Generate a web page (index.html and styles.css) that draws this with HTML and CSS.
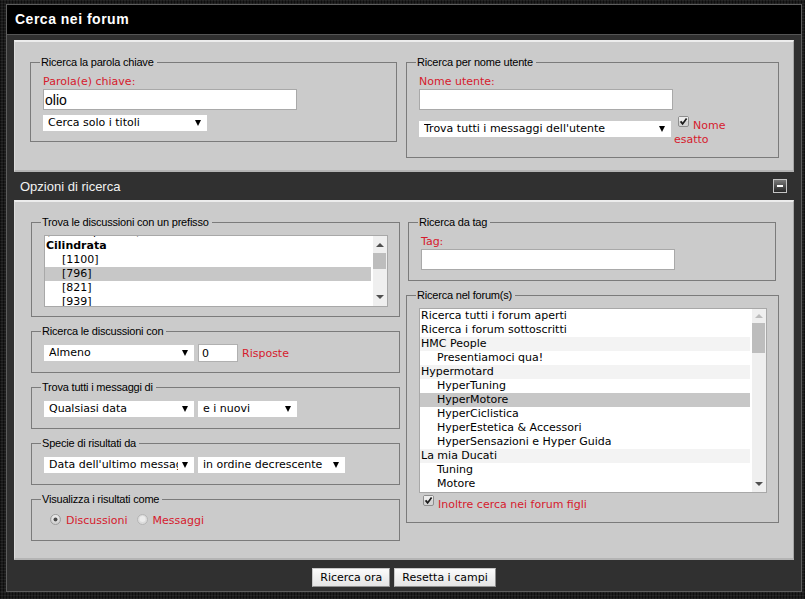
FILE: index.html
```html
<!DOCTYPE html>
<html lang="it">
<head>
    <meta charset="UTF-8">
    <meta name="viewport" content="width=device-width, initial-scale=1.0">
    <title>Cerca nei forum</title>
    <link rel="stylesheet" href="styles.css">
</head>
<body>
    <div class="frame">
        <div class="frame-title">Cerca nei forum</div>
        <div class="frame-body">

            <div class="panel panel-top">
                <fieldset class="box">
                    <legend>Ricerca la parola chiave</legend>
                    <label class="field-label" for="keywords">Parola(e) chiave:</label>
                    <input type="text" id="keywords" class="text-input" value="olio">
                    <span class="select select-titles">
                        <select><option>Cerca solo i titoli</option></select>
                    </span>
                </fieldset>

                <fieldset class="box">
                    <legend>Ricerca per nome utente</legend>
                    <label class="field-label" for="username">Nome utente:</label>
                    <input type="text" id="username" class="text-input">
                    <div class="user-row">
                        <span class="select select-user">
                            <select><option>Trova tutti i messaggi dell'utente</option></select>
                        </span>
                        <label class="check-label exact-name">
                            <svg class="check" width="11" height="11" viewBox="0 0 11 11"><rect x="0.5" y="0.5" width="10" height="10" rx="1.5" fill="#d4d4d4" stroke="#8e8e8e"/><rect x="1" y="1" width="9" height="4" fill="#ececec"/><path d="M2.6 5.4 L4.6 7.9 L8.6 2.4" fill="none" stroke="#1a1a1a" stroke-width="1.7"/></svg>Nome esatto
                        </label>
                    </div>
                </fieldset>
            </div>

            <div class="section-bar">
                <span>Opzioni di ricerca</span>
                <span class="collapse-btn"><span></span></span>
            </div>

            <div class="panel panel-options">
                <div class="col">
                    <fieldset class="box box-list">
                        <legend>Trova le discussioni con un prefisso</legend>
                        <div class="listbox prefix-list">
                            <div class="rows prefix-rows">
                                <div class="row">(nessun prefisso)</div>
                                <div class="row group-bold">Cilindrata</div>
                                <div class="row child">[1100]</div>
                                <div class="row child selected">[796]</div>
                                <div class="row child">[821]</div>
                                <div class="row child">[939]</div>
                            </div>
                            <div class="scrollbar">
                                <span class="arrow-up"></span>
                                <span class="thumb"></span>
                                <span class="spacer"></span>
                                <span class="arrow-down"></span>
                            </div>
                        </div>
                    </fieldset>

                    <fieldset class="box">
                        <legend>Ricerca le discussioni con</legend>
                        <div class="ctrl-row">
                            <span class="select w150"><select><option>Almeno</option></select></span>
                            <input type="text" class="num-input" value="0">
                            <span class="red">Risposte</span>
                        </div>
                    </fieldset>

                    <fieldset class="box">
                        <legend>Trova tutti i messaggi di</legend>
                        <div class="ctrl-row">
                            <span class="select w150"><select><option>Qualsiasi data</option></select></span>
                            <span class="select w99"><select><option>e i nuovi</option></select></span>
                        </div>
                    </fieldset>

                    <fieldset class="box">
                        <legend>Specie di risultati da</legend>
                        <div class="ctrl-row">
                            <span class="select w150"><select><option>Data dell'ultimo messaggio</option></select></span>
                            <span class="select w147"><select><option>in ordine decrescente</option></select></span>
                        </div>
                    </fieldset>

                    <fieldset class="box">
                        <legend>Visualizza i risultati come</legend>
                        <div class="ctrl-row radios">
                            <label class="radio-label">
                                <svg class="radio" width="11" height="11" viewBox="0 0 11 11"><circle cx="5.5" cy="5.5" r="5" fill="#d2d2d2" stroke="#9c9c9c"/><circle cx="5.5" cy="4.5" r="3.5" fill="#e6e6e6"/><circle cx="5.5" cy="5.5" r="2" fill="#4a4a4a"/></svg>Discussioni
                            </label>
                            <label class="radio-label second">
                                <svg class="radio" width="11" height="11" viewBox="0 0 11 11"><circle cx="5.5" cy="5.5" r="5" fill="#dcdcdc" stroke="#b4b4b4"/><circle cx="5.5" cy="5" r="3" fill="#ececec"/></svg>Messaggi
                            </label>
                        </div>
                    </fieldset>
                </div>

                <div class="col">
                    <fieldset class="box box-tag">
                        <legend>Ricerca da tag</legend>
                        <label class="field-label" for="tag">Tag:</label>
                        <input type="text" id="tag" class="text-input">
                    </fieldset>

                    <fieldset class="box box-forums">
                        <legend>Ricerca nel forum(s)</legend>
                        <div class="listbox forum-list">
                            <div class="rows">
                                <div class="row">Ricerca tutti i forum aperti</div>
                                <div class="row">Ricerca i forum sottoscritti</div>
                                <div class="row group">HMC People</div>
                                <div class="row child">Presentiamoci qua!</div>
                                <div class="row group">Hypermotard</div>
                                <div class="row child">HyperTuning</div>
                                <div class="row child selected">HyperMotore</div>
                                <div class="row child">HyperCiclistica</div>
                                <div class="row child">HyperEstetica &amp; Accessori</div>
                                <div class="row child">HyperSensazioni e Hyper Guida</div>
                                <div class="row group">La mia Ducati</div>
                                <div class="row child">Tuning</div>
                                <div class="row child">Motore</div>
                            </div>
                            <div class="scrollbar">
                                <span class="arrow-up disabled"></span>
                                <span class="thumb"></span>
                                <span class="spacer"></span>
                                <span class="arrow-down"></span>
                            </div>
                        </div>
                        <label class="check-label child-forums">
                            <svg class="check" width="11" height="11" viewBox="0 0 11 11"><rect x="0.5" y="0.5" width="10" height="10" rx="1.5" fill="#d4d4d4" stroke="#8e8e8e"/><rect x="1" y="1" width="9" height="4" fill="#ececec"/><path d="M2.6 5.4 L4.6 7.9 L8.6 2.4" fill="none" stroke="#1a1a1a" stroke-width="1.7"/></svg>Inoltre cerca nei forum figli
                        </label>
                    </fieldset>
                </div>
            </div>

            <div class="actions">
                <button type="button" class="btn">Ricerca ora</button>
                <button type="button" class="btn">Resetta i campi</button>
            </div>
        </div>
    </div>
</body>
</html>
```

FILE: styles.css
```css
html {
    background-color: #1b1b1b;
    background-image:
        repeating-linear-gradient(0deg, rgba(255, 255, 255, 0.05) 0 1px, transparent 1px 3px),
        repeating-linear-gradient(90deg, rgba(0, 0, 0, 0.5) 0 1px, transparent 1px 3px);
}

body {
    margin: 0;
    font-family: "DejaVu Sans", Verdana, sans-serif;
    font-size: 11px;
    color: #000;
}

.frame {
    width: 794px;
    margin: 4px 0 0 6px;
    border: 1px solid #5e5e5e;
    background: #303030;
}

.frame-title {
    height: 29px;
    padding-left: 8px;
    background: #000;
    border-bottom: 1px solid #555;
    color: #fff;
    font: bold 14px/29px "Liberation Sans", Arial, sans-serif;
    letter-spacing: 0.5px;
}

.frame-body {
    padding-top: 5px;
}

/* light grey panels */
.panel {
    margin: 0 7px;
    background: #cbcbcb;
    border: 1px solid #a6a6a6;
    border-top: 2px solid #ececec;
    border-bottom: 2px solid #b4b4b4;
    border-left-color: #dcdcdc;
    display: grid;
    align-items: start;
}

.panel-top {
    grid-template-columns: 367px 373px;
    column-gap: 9px;
    padding: 14px 14px 12px 15px;
}

.panel-options {
    grid-template-columns: 369px 373px;
    column-gap: 6px;
    padding: 14px 14px 17px 16px;
}

.col {
    display: flex;
    flex-direction: column;
    gap: 8px;
}

/* fieldsets */
.box {
    margin: 0;
    min-width: 0;
    padding: 6px 11px 10px 12px;
    border: 1px solid #7b7b7b;
}

.box legend {
    margin-left: -3px;
    padding: 0 3px 0 1px;
    font: 11px/13px "Liberation Sans", Arial, sans-serif;
    letter-spacing: -0.2px;
    color: #000;
}

.box-list {
    padding-bottom: 9px;
}

.box-tag {
    margin: 0 3px 0 2px;
}

.box-forums {
    padding-bottom: 9px;
}

.field-label {
    display: block;
    line-height: 14px;
    color: #d61a2d;
}

.red {
    color: #d61a2d;
}

.text-input {
    display: block;
    box-sizing: border-box;
    width: 254px;
    height: 21px;
    margin: 0;
    padding: 0 1px;
    border: 1px solid #a9a9a9;
    background: #fff;
    font: 14px "Liberation Sans", Arial, sans-serif;
    color: #000;
    outline: none;
}

.num-input {
    box-sizing: border-box;
    width: 40px;
    height: 18px;
    margin: 0;
    padding: 0 3px;
    border: 1px solid #b0b0b0;
    background: #fff;
    font: 11px "DejaVu Sans", Verdana, sans-serif;
    color: #000;
}

/* selects with a black arrow */
.select {
    position: relative;
    display: inline-block;
    height: 16px;
    background: #fff;
}

.select select {
    appearance: none;
    -webkit-appearance: none;
    display: block;
    box-sizing: border-box;
    width: 100%;
    height: 16px;
    margin: 0;
    padding: 0 16px 0 5px;
    border: none;
    border-radius: 0;
    background: #fff;
    font: 11px/16px "DejaVu Sans", Verdana, sans-serif;
    color: #000;
}

.select::after {
    content: "";
    position: absolute;
    right: 6px;
    top: 5px;
    border-left: 3px solid transparent;
    border-right: 3px solid transparent;
    border-top: 6px solid #000;
    pointer-events: none;
}

.select-titles {
    display: block;
    width: 164px;
    margin-top: 5px;
}

.select-user {
    width: 252px;
    margin-top: 2px;
    flex: none;
}

.w150 { width: 150px; }
.w99 { width: 99px; }
.w147 { width: 147px; }

.user-row {
    display: flex;
    align-items: flex-start;
    gap: 3px;
    margin-top: 9px;
}

.ctrl-row {
    display: flex;
    align-items: center;
    gap: 4px;
    height: 18px;
}

/* checkboxes and radios */
.check-label,
.radio-label {
    color: #d61a2d;
    line-height: 14px;
}

.check {
    vertical-align: 2px;
    margin: -3px 4px 0 4px;
}

.exact-name {
    width: 80px;
}

.child-forums {
    display: block;
    margin-top: 4px;
    line-height: 16px;
}

.radios {
    gap: 0;
}

.radio {
    vertical-align: -1px;
    margin: 0 5px 0 6px;
}

.radio-label.second .radio {
    margin-left: 9px;
}

/* list boxes */
.listbox {
    display: flex;
    overflow: hidden;
    border: 1px solid #a8a8a8;
    background: #fff;
}

.prefix-list {
    height: 70px;
}

.forum-list {
    height: 183px;
}

.rows {
    flex: 1;
    min-width: 0;
    padding-right: 2px;
}

.prefix-rows {
    margin-top: -11px;
}

.row {
    height: 14px;
    line-height: 14px;
    padding-left: 1px;
    white-space: nowrap;
}

.row.child {
    padding-left: 17px;
}

.row.group {
    background: #f3f3f3;
}

.row.group-bold {
    font-weight: bold;
}

.row.selected {
    background: #c7c7c7;
}

.scrollbar {
    width: 14px;
    flex: none;
    display: flex;
    flex-direction: column;
    align-items: center;
    background: #efefef;
    padding: 7px 0 7px;
    box-sizing: border-box;
}

.forum-list .scrollbar {
    padding: 5px 0 6px;
}

.arrow-up {
    width: 0;
    height: 0;
    border-left: 4px solid transparent;
    border-right: 4px solid transparent;
    border-bottom: 4px solid #505050;
}

.arrow-up.disabled {
    border-bottom-color: #bcbcbc;
}

.arrow-down {
    width: 0;
    height: 0;
    border-left: 4px solid transparent;
    border-right: 4px solid transparent;
    border-top: 4px solid #505050;
}

.thumb {
    width: 13px;
    height: 16px;
    margin-top: 6px;
    margin-right: 1px;
    background: #bdbdbd;
}

.forum-list .thumb {
    height: 30px;
    margin-top: 5px;
}

.spacer {
    flex: 1;
}

/* "Opzioni di ricerca" bar */
.section-bar {
    height: 28px;
    margin: 0 7px;
    padding: 0 7px 0 6px;
    display: flex;
    align-items: center;
    justify-content: space-between;
    color: #f2f2f2;
    font: 13px "Liberation Sans", Arial, sans-serif;
}

.collapse-btn {
    width: 12px;
    height: 12px;
    border: 1px solid #c4c4c4;
    background: linear-gradient(#7a7a7a, #262626);
    display: flex;
    align-items: center;
    justify-content: center;
}

.collapse-btn span {
    width: 6px;
    height: 2px;
    background: #fff;
}

/* buttons */
.actions {
    display: flex;
    justify-content: center;
    gap: 4px;
    padding: 8px 0 4px;
}

.btn {
    height: 19px;
    margin: 0;
    padding: 0 7px;
    border: 1px solid #8f8f8f;
    border-top-color: #c8c8c8;
    border-left-color: #c8c8c8;
    background: linear-gradient(#fbfbfb, #e4e4e4);
    font: 11px "DejaVu Sans", Verdana, sans-serif;
    color: #000;
    cursor: pointer;
}
```
